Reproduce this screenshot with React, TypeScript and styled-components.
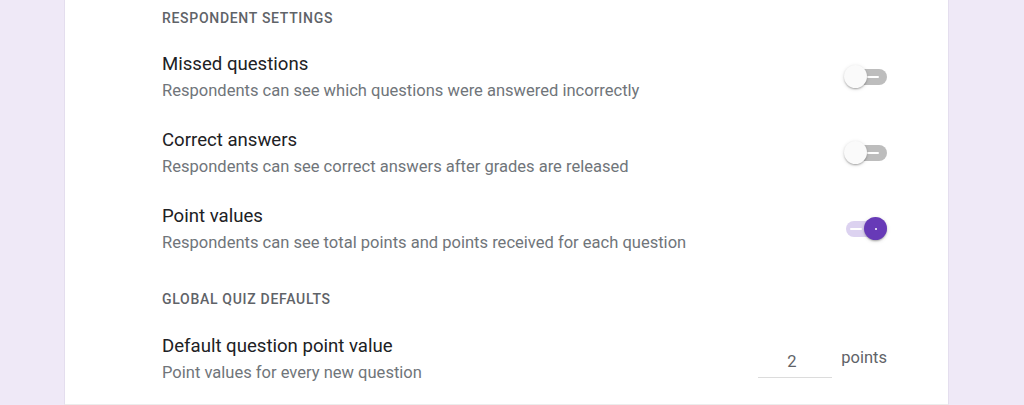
import React from "react";
import styled, { createGlobalStyle } from "styled-components";

const Global = createGlobalStyle`
  html, body {
    margin: 0;
    padding: 0;
    background: #efe9f7;
    font-family: Roboto, "Noto Sans", Arial, sans-serif;
    -webkit-font-smoothing: antialiased;
  }
`;

const Page = styled.div`
  display: flex;
  height: 405px;
  overflow: hidden;
`;

const Card = styled.div`
  margin-left: 64px;
  width: 885px;
  height: 405px;
  box-sizing: border-box;
  background: #fff;
  border-left: 1px solid #e4deee;
  border-right: 1px solid #e4deee;
  border-bottom: 1px solid #ececec;
  padding: 8px 61px 0 97px;
  display: flex;
  flex-direction: column;
`;

const SectionHeader = styled.div<{ $top?: number; $bottom?: number }>`
  font-size: 14px;
  line-height: 20px;
  font-weight: 500;
  letter-spacing: 0.7px;
  color: #5f6368;
  text-transform: uppercase;
  margin-top: ${(p) => p.$top ?? 0}px;
  margin-bottom: ${(p) => p.$bottom ?? 24}px;
`;

const Rows = styled.div`
  display: flex;
  flex-direction: column;
  gap: 27px;
`;

const Row = styled.div`
  display: flex;
  align-items: center;
  justify-content: space-between;
`;

const Texts = styled.div`
  display: flex;
  flex-direction: column;
`;

const Title = styled.div`
  font-size: 18.6px;
  line-height: 24px;
  color: #202124;
`;

const Subtitle = styled.div`
  font-size: 16.55px;
  line-height: 20px;
  color: #70757a;
  margin-top: 5px;
`;

const SwitchRoot = styled.div<{ $on: boolean }>`
  position: relative;
  width: 44px;
  height: 24px;
  flex-shrink: 0;
`;

const Track = styled.div<{ $on: boolean }>`
  position: absolute;
  left: 3px;
  top: 4px;
  width: 41px;
  height: 16px;
  border-radius: 8px;
  background: ${(p) => (p.$on ? "#dcd2f0" : "#bdbdbd")};
  &::after {
    content: "";
    position: absolute;
    top: 7px;
    height: 2px;
    width: 12px;
    border-radius: 1px;
    background: #fff;
    left: ${(p) => (p.$on ? "4px" : "21px")};
  }
`;

const Thumb = styled.div<{ $on: boolean }>`
  position: absolute;
  top: 0.5px;
  left: ${(p) => (p.$on ? "21px" : "1px")};
  width: 23px;
  height: 23px;
  border-radius: 50%;
  background: ${(p) => (p.$on ? "#673ab7" : "#fafafa")};
  box-shadow: 0 2px 2px -1px rgba(0, 0, 0, 0.2), 0 1px 2px 0 rgba(0, 0, 0, 0.14),
    0 1px 4px 0 rgba(0, 0, 0, 0.12);
  display: flex;
  align-items: center;
  justify-content: center;
  &::after {
    content: "";
    width: 2px;
    height: 2px;
    border-radius: 50%;
    background: ${(p) => (p.$on ? "#fff" : "transparent")};
  }
`;

const Switch = ({ on }: { on: boolean }) => (
  <SwitchRoot $on={on} role="switch" aria-checked={on}>
    <Track $on={on} />
    <Thumb $on={on} />
  </SwitchRoot>
);

const PointsControl = styled.div`
  display: flex;
  align-items: flex-start;
  gap: 9px;
  margin-top: 8px;
`;

const PointsInput = styled.div`
  width: 74px;
  height: 31px;
  box-sizing: border-box;
  padding-right: 7px;
  border-bottom: 1px solid #dcdcdc;
  text-align: center;
  font-size: 16.5px;
  line-height: 30px;
  color: #5f6368;
`;

const PointsLabel = styled.div`
  font-size: 16.5px;
  line-height: 24px;
  color: #5f6368;
  margin-top: -1px;
`;

const settings = [
  {
    title: "Missed questions",
    sub: "Respondents can see which questions were answered incorrectly",
    on: false,
  },
  {
    title: "Correct answers",
    sub: "Respondents can see correct answers after grades are released",
    on: false,
  },
  {
    title: "Point values",
    sub: "Respondents can see total points and points received for each question",
    on: true,
  },
];

export default function App() {
  return (
    <>
      <Global />
      <Page>
        <Card>
          <SectionHeader>Respondent settings</SectionHeader>
          <Rows>
            {settings.map((s) => (
              <Row key={s.title}>
                <Texts>
                  <Title>{s.title}</Title>
                  <Subtitle>{s.sub}</Subtitle>
                </Texts>
                <Switch on={s.on} />
              </Row>
            ))}
          </Rows>
          <SectionHeader $top={36} $bottom={25}>
            Global quiz defaults
          </SectionHeader>
          <Row>
            <Texts>
              <Title>Default question point value</Title>
              <Subtitle>Point values for every new question</Subtitle>
            </Texts>
            <PointsControl>
              <PointsInput>2</PointsInput>
              <PointsLabel>points</PointsLabel>
            </PointsControl>
          </Row>
        </Card>
      </Page>
    </>
  );
}
